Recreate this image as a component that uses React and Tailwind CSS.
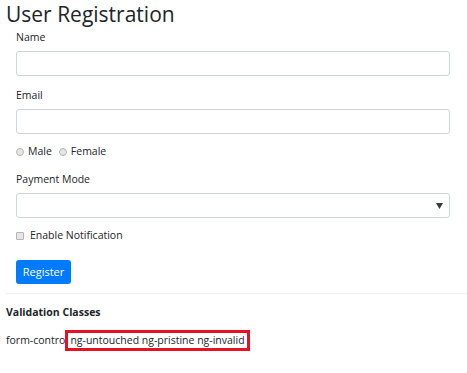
import React from 'react'

function Field({ label, top = 'mt-[11px]', children }) {
  return (
    <div className={top}>
      <div className="h-4 leading-4 mb-[6px]">{label}</div>
      {children}
    </div>
  )
}

export default function App() {
  return (
    <div
      className="w-[467px] h-[373px] bg-white text-[#212529] text-[10.5px] overflow-hidden"
      style={{ fontFamily: '"Open Sans", "Noto Sans", sans-serif' }}
    >
      <h2 className="pl-[6px] h-[28px] leading-[28px] text-[21px] font-medium">User Registration</h2>

      <form className="pl-4 pr-[17px]">
        <Field label="Name" top="mt-[1px]">
          <input className="block w-full h-[25px] border border-[#ced4da] rounded-[3px]" />
        </Field>
        <Field label="Email">
          <input className="block w-full h-[25px] border border-[#ced4da] rounded-[3px]" />
        </Field>

        <div className="mt-[10px] h-4 flex items-center gap-[4px]">
          <span className="w-[8px] h-[8px] rounded-full border border-[#b5b5b5] bg-[#e6e6e6]" />
          <span className="mr-[3px]">Male</span>
          <span className="w-[8px] h-[8px] rounded-full border border-[#b5b5b5] bg-[#e6e6e6]" />
          <span>Female</span>
        </div>

        <Field label="Payment Mode">
          <div className="flex items-center justify-end w-full h-[25px] border border-[#ced4da] rounded-[3px] pr-[6px]">
            <svg width="7" height="6" viewBox="0 0 7 6">
              <path d="M0 0h7L3.5 6z" fill="#343a40" />
            </svg>
          </div>
        </Field>

        <div className="mt-[10px] h-4 flex items-center gap-[6px]">
          <span className="w-[8px] h-[8px] rounded-[1px] border border-[#b5b5b5] bg-[#e6e6e6]" />
          <span>Enable Notification</span>
        </div>

        <button
          type="button"
          className="mt-4 w-[55px] h-[24px] rounded-[3px] bg-[#007bff] text-white text-[11px] flex items-center justify-center"
        >
          Register
        </button>
      </form>

      <hr className="mt-[9px] ml-[6px] border-t border-[#eeeeee]" />

      <div className="pl-[6px] mt-[10px] h-4 leading-4 font-bold">Validation Classes</div>
      <div className="pl-[6px] mt-[10px] flex items-center">
        <span>form-contro</span>
        <span className="border-[3px] border-[#e81123] px-[2px] h-[21px] flex items-center">
          ng-untouched ng-pristine ng-invalid
        </span>
      </div>
    </div>
  )
}
